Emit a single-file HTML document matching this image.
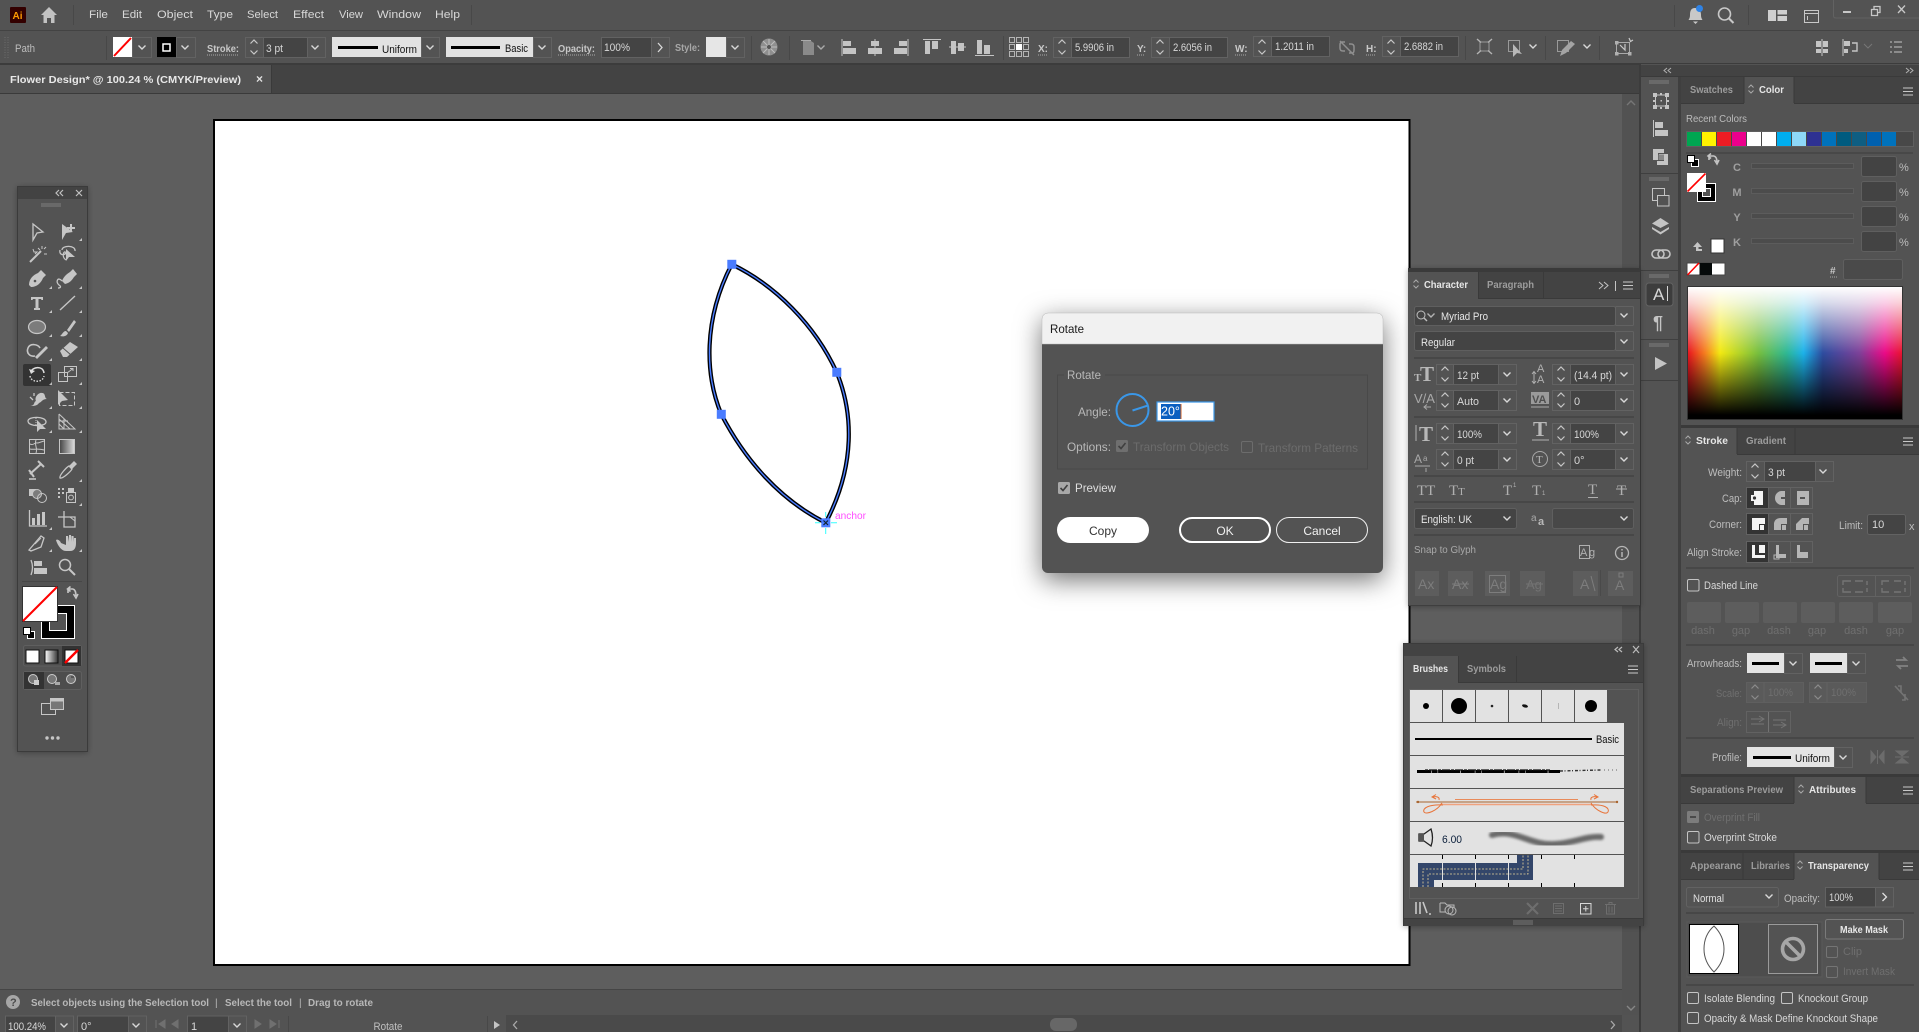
<!DOCTYPE html>
<html lang="en"><head><meta charset="utf-8"><title>Flower Design</title>
<style>
html,body{margin:0;padding:0;background:#535353;overflow:hidden}
svg{display:block;position:absolute;left:0;top:0}
text{font-family:"Liberation Sans",sans-serif;font-size:11px;fill:#d8d8d8}
.dim{fill:#6f6f6f}.lab{fill:#bdbdbd}.tab{fill:#9c9c9c;font-weight:bold;font-size:10.5px}.tabon{fill:#e6e6e6;font-weight:bold;font-size:10.5px}
.dk{fill:#111}.end{text-anchor:end}.mid{text-anchor:middle}
.f{fill:#444;stroke:#626262}.s{fill:#535353;stroke:#626262}.n{fill:none}
.ln{stroke:#c8c8c8;fill:none;stroke-width:1.3}.ic{fill:#c6c6c6}.icl{fill:none;stroke:#c6c6c6;stroke-width:1.3}
.cb{fill:none;stroke:#c4c4c4}.sep{fill:#474747}
</style></head><body>
<svg width="1919" height="1032" viewBox="0 0 1919 1032" xmlns="http://www.w3.org/2000/svg">
<defs>
<path id="c" d="M-3.5-1.5 0 2 3.5-1.5" fill="none" stroke="#d8d8d8" stroke-width="1.4"/>
<path id="sp" d="M-3.5-3.5 0-7 3.5-3.5M-3.5 3.5 0 7 3.5 3.5" fill="none" stroke="#c8c8c8" stroke-width="1.2"/>
<path id="m" d="M0 0H10M0 3.5H10M0 7H10" stroke="#c8c8c8" stroke-width="1.1" fill="none"/>
<path id="ud" d="M-2.5-1.5 0-4 2.5-1.5M-2.5 1.5 0 4 2.5 1.5" stroke="#aaa" fill="none"/>
<path id="tr" d="M12 11H15V8Z" fill="#c6c6c6"/>
<g id="grip"><path d="M0 0V4M2 0V4M4 0V4M6 0V4M8 0V4M10 0V4M12 0V4M14 0V4M16 0V4M18 0V4" stroke="#7f7f7f" stroke-width="1"/></g>
<linearGradient id="hue"><stop offset="0" stop-color="#e8151f"/><stop offset=".08" stop-color="#f57f1f"/><stop offset=".15" stop-color="#f3e911"/><stop offset=".33" stop-color="#76bf3f"/><stop offset=".46" stop-color="#2fb893"/><stop offset=".54" stop-color="#1cb2ea"/><stop offset=".63" stop-color="#2e4c9f"/><stop offset=".8" stop-color="#7d4199"/><stop offset=".92" stop-color="#ea0a88"/><stop offset="1" stop-color="#e8152f"/></linearGradient>
<linearGradient id="vw" x2="0" y2="1"><stop offset="0" stop-color="#fff"/><stop offset=".12" stop-color="#fff" stop-opacity=".8"/><stop offset=".5" stop-color="#fff" stop-opacity="0"/></linearGradient>
<linearGradient id="vb" x2="0" y2="1"><stop offset=".5" stop-color="#000" stop-opacity="0"/><stop offset=".97" stop-color="#000"/></linearGradient>
<linearGradient id="gr"><stop offset="0" stop-color="#fff"/><stop offset="1" stop-color="#333"/></linearGradient>
<filter id="sh" x="-25%" y="-25%" width="150%" height="160%"><feDropShadow dx="0" dy="7" stdDeviation="13" flood-color="#000" flood-opacity=".55"/></filter>
<filter id="sh2" x="-20%" y="-10%" width="140%" height="120%"><feDropShadow dx="0" dy="1" stdDeviation="3" flood-color="#000" flood-opacity=".3"/></filter>
<filter id="bl"><feGaussianBlur stdDeviation="1.3"/></filter>
</defs>

<!-- base -->
<rect width="1919" height="1032" fill="#535353"/>
<rect x="0" y="93" width="1622" height="897" fill="#5e5e5e"/>
<rect x="0" y="65" width="1640" height="28" fill="#434343"/>
<rect y="30" width="1919" height="1" fill="#434343"/>
<rect y="63" width="1919" height="2" fill="#3c3c3c"/>
<rect x="0" y="65" width="271" height="28" fill="#535353"/>
<rect x="271" y="65" width="1" height="28" fill="#3a3a3a"/>
<rect x="0" y="93" width="1640" height="1" fill="#3a3a3a"/>
<text x="10" y="83" style="fill:#e8e8e8;font-weight:bold;font-size:10.5px" textLength="231" lengthAdjust="spacingAndGlyphs">Flower Design* @ 100.24 % (CMYK/Preview)</text>
<text x="256" y="83" style="fill:#e0e0e0;font-weight:bold;font-size:12px">×</text>

<!-- artboard -->
<rect x="214" y="120" width="1195.5" height="845" fill="#fff" stroke="#000" stroke-width="2"/>

<!-- leaf -->
<path d="M731.7 264.3C775 285 815 325 836.7 372.3 853 412 856 465 825.7 522.7 780 500 745 460 721.3 414.3 705 375 703 320 731.7 264.3Z" fill="none" stroke="#000" stroke-width="4.2"/>
<path d="M731.7 264.3C775 285 815 325 836.7 372.3 853 412 856 465 825.7 522.7 780 500 745 460 721.3 414.3 705 375 703 320 731.7 264.3Z" fill="none" stroke="#4a7cff" stroke-width="1.4"/>
<rect x="727.3" y="259.8" width="9" height="9" fill="#4a7cff"/>
<rect x="832.3" y="367.8" width="9" height="9" fill="#4a7cff"/>
<rect x="716.8" y="409.8" width="9" height="9" fill="#4a7cff"/>
<rect x="821.3" y="518.3" width="9" height="9" fill="#4a7cff"/>
<path d="M823.5 520.5 828 525M828 520.5 823.5 525" stroke="#123" stroke-width="1.2"/>
<path d="M825.7 512V517M825.7 528V534M815 522.7H820M831 522.7H837" stroke="#3ff" stroke-width="1"/>
<text x="835" y="519" style="fill:#ff4dff;font-size:10.5px" textLength="31" lengthAdjust="spacingAndGlyphs">anchor</text>

<!-- scrollbars -->
<rect x="1622" y="94" width="17" height="921" fill="#525252"/>
<path d="M1627 105 1631 101 1635 105" fill="none" stroke="#767676" stroke-width="1.4"/>
<path d="M1627 1006 1631 1010 1635 1006" fill="none" stroke="#868686" stroke-width="1.4"/>

<!-- menu bar -->
<rect x="10" y="7" width="16" height="16" rx="1" fill="#330000"/>
<text x="12.5" y="19" style="fill:#ff9a00;font-weight:bold;font-size:10px">Ai</text>
<path d="M49 7 41 15H43.5V23H47V18H51V23H54.5V15H57Z" fill="#c2c2c2"/>
<rect x="73" y="5" width="1" height="20" fill="#484848"/>
<g>
<text x="89" y="18" textLength="19" lengthAdjust="spacingAndGlyphs">File</text>
<text x="122" y="18" textLength="20" lengthAdjust="spacingAndGlyphs">Edit</text>
<text x="157" y="18" textLength="36" lengthAdjust="spacingAndGlyphs">Object</text>
<text x="207" y="18" textLength="26" lengthAdjust="spacingAndGlyphs">Type</text>
<text x="247" y="18" textLength="31" lengthAdjust="spacingAndGlyphs">Select</text>
<text x="293" y="18" textLength="31" lengthAdjust="spacingAndGlyphs">Effect</text>
<text x="339" y="18" textLength="24" lengthAdjust="spacingAndGlyphs">View</text>
<text x="377" y="18" textLength="44" lengthAdjust="spacingAndGlyphs">Window</text>
<text x="435" y="18" textLength="25" lengthAdjust="spacingAndGlyphs">Help</text>
</g>
<rect x="471" y="5" width="1" height="20" fill="#484848"/>
<rect x="1674" y="5" width="1" height="22" fill="#484848"/>
<rect x="1748" y="5" width="1" height="20" fill="#484848"/>
<path d="M1695 8C1691 8 1690 11 1690 15 1690 18 1689 19 1688.5 20H1702.5C1702 19 1701 18 1701 15 1701 11 1699 8 1695 8ZM1693 21.5H1698L1695.5 24Z" fill="#c8c8c8"/>
<circle cx="1699.5" cy="8.5" r="3.5" fill="#2f83e6"/>
<circle cx="1724.5" cy="14" r="6" fill="none" stroke="#c8c8c8" stroke-width="1.6"/><path d="M1729 18.5 1733.5 23" stroke="#c8c8c8" stroke-width="2"/>
<path d="M1768 10H1776V21H1768ZM1777.5 10H1787V14.5H1777.5ZM1777.5 16H1787V21H1777.5Z" fill="#cfcfcf"/>
<rect x="1804.5" y="10.5" width="14" height="12" fill="none" stroke="#c8c8c8"/><path d="M1804 13.5H1819M1807.5 16V20" stroke="#c8c8c8"/>
<path d="M1833.5 0V16Q1833.5 18 1836 18H1919" fill="none" stroke="#626262"/>
<rect x="1843" y="11" width="8" height="2" fill="#c8c8c8"/>
<path d="M1871.5 9.5H1877.5V15.5H1871.5ZM1874 9.5V6.5H1880V12.5H1877.5" fill="none" stroke="#c8c8c8" stroke-width="1.3"/>
<path d="M1898 5.5 1905 13M1905 5.5 1898 13" stroke="#c8c8c8" stroke-width="1.3"/>

<!-- control bar -->
<path d="M5 37V58M8 37V58" stroke="#6c6c6c" stroke-dasharray="1 1.5"/>
<text x="15" y="52" class="lab" textLength="20" lengthAdjust="spacingAndGlyphs" style="fill:#bdbdbd">Path</text>
<rect x="106" y="36" width="1" height="24" fill="#484848"/>
<rect x="113" y="37" width="19" height="20" fill="#fff"/><path d="M114 56 131 38" stroke="#f00" stroke-width="2"/>
<rect x="132.5" y="37.5" width="19" height="20" class="s"/><use href="#c" x="142" y="47"/>
<rect x="157" y="37" width="19" height="20" fill="#000"/><rect x="163" y="44" width="7" height="7" fill="#000" stroke="#fff" stroke-width="1.5"/>
<rect x="176.5" y="37.5" width="19" height="20" class="s"/><use href="#c" x="185" y="47"/>
<text x="207" y="52" style="font-weight:bold;font-size:10.5px;fill:#c8c8c8" textLength="32" lengthAdjust="spacingAndGlyphs">Stroke:</text><path d="M207 55H239" stroke="#aaa" stroke-dasharray="1 1"/>
<rect x="245.5" y="37.5" width="18" height="20" class="s"/><rect x="263.5" y="37.5" width="44" height="20" class="f"/><rect x="307.5" y="37.5" width="18" height="20" class="s"/>
<use href="#sp" x="254" y="47"/><text x="266" y="52" textLength="17" lengthAdjust="spacingAndGlyphs">3 pt</text><use href="#c" x="315" y="47"/>
<rect x="332" y="37" width="89" height="20" fill="#e2e2e2"/><rect x="338" y="46" width="40" height="3" fill="#000"/><text x="382" y="53" class="dk" textLength="35" lengthAdjust="spacingAndGlyphs">Uniform</text>
<rect x="421.5" y="37.5" width="18" height="20" class="s"/><use href="#c" x="430" y="47"/>
<rect x="446" y="37" width="87" height="20" fill="#e2e2e2"/><rect x="451" y="46" width="49" height="3" fill="#000"/><text x="505" y="52" class="dk" textLength="23" lengthAdjust="spacingAndGlyphs">Basic</text>
<rect x="533.5" y="37.5" width="18" height="20" class="s"/><use href="#c" x="542" y="47"/>
<text x="558" y="52" style="font-weight:bold;font-size:10.5px;fill:#c8c8c8" textLength="37" lengthAdjust="spacingAndGlyphs">Opacity:</text><path d="M558 55H595" stroke="#aaa" stroke-dasharray="1 1"/>
<rect x="601.5" y="37.5" width="50" height="20" class="f"/><rect x="651.5" y="37.5" width="18" height="20" class="s"/><text x="604" y="51" textLength="26" lengthAdjust="spacingAndGlyphs">100%</text><path d="M658 43 662 47.5 658 52" fill="none" stroke="#d8d8d8" stroke-width="1.3"/>
<text x="675" y="51" class="lab" style="font-weight:bold;font-size:10.5px;fill:#a8a8a8" textLength="25" lengthAdjust="spacingAndGlyphs">Style:</text>
<rect x="706" y="37" width="20" height="20" fill="#e6e6e6"/><rect x="726.5" y="37.5" width="18" height="20" class="s"/><use href="#c" x="735" y="47"/>
<rect x="751" y="36" width="1" height="24" fill="#484848"/>
<circle cx="769" cy="47" r="8.5" fill="#8f8f8f"/><path d="M769 39V55M761 47H777M763 41 775 53M775 41 763 53" stroke="#bdbdbd"/><circle cx="769" cy="47" r="2" fill="#555"/>
<rect x="789" y="36" width="1" height="24" fill="#484848"/>
<path d="M803 41H811L814 43V55H803Z" fill="#8a8a8a"/><path d="M801 40.5H811" stroke="#aaa"/><use href="#c" x="821" y="47" style="opacity:.65"/>
<path d="M842 39V56" stroke="#c4c4c4"/><path d="M843 41H851V46H843ZM843 48H856V54H843Z" fill="#c4c4c4"/>
<path d="M875 39V56" stroke="#c4c4c4"/><path d="M871 41H879V46H871ZM868 48H882V54H868Z" fill="#c4c4c4"/>
<path d="M908 39V56" stroke="#c4c4c4"/><path d="M899 41H907V46H899ZM894 48H907V54H894Z" fill="#c4c4c4"/>
<path d="M923 39.5H941" stroke="#c4c4c4"/><path d="M925 41H930V54H925ZM932 41H938V49H932Z" fill="#c4c4c4"/>
<path d="M949 47H966" stroke="#c4c4c4"/><path d="M951 41H956V54H951ZM958 43H964V51H958Z" fill="#c4c4c4"/>
<path d="M975 55.5H994" stroke="#c4c4c4"/><path d="M977 40H982V54H977ZM984 45H990V54H984Z" fill="#c4c4c4"/>
<rect x="1003" y="36" width="1" height="24" fill="#484848"/>
<g fill="none" stroke="#b4b4b4"><rect x="1009.5" y="37.5" width="5" height="5"/><rect x="1016.5" y="37.5" width="5" height="5"/><rect x="1023.5" y="37.5" width="5" height="5"/><rect x="1009.5" y="44.5" width="5" height="5"/><rect x="1023.5" y="44.5" width="5" height="5"/><rect x="1009.5" y="51.5" width="5" height="5"/><rect x="1016.5" y="51.5" width="5" height="5"/><rect x="1023.5" y="51.5" width="5" height="5"/></g><rect x="1016" y="44" width="6" height="6" fill="#fff"/>
<g>
<text x="1038" y="52" style="font-size:10px;font-weight:bold;fill:#c8c8c8">X:</text><path d="M1038 55H1047" stroke="#aaa" stroke-dasharray="1 1"/>
<text x="1137" y="52" style="font-size:10px;font-weight:bold;fill:#c8c8c8">Y:</text><path d="M1137 55H1145" stroke="#aaa" stroke-dasharray="1 1"/>
<text x="1235" y="52" style="font-size:10px;font-weight:bold;fill:#c8c8c8">W:</text><path d="M1235 55H1247" stroke="#aaa" stroke-dasharray="1 1"/>
<text x="1366" y="52" style="font-size:10px;font-weight:bold;fill:#c8c8c8">H:</text><path d="M1366 55H1376" stroke="#aaa" stroke-dasharray="1 1"/>
</g>
<rect x="1053.5" y="37.5" width="18" height="20" class="s"/><rect x="1071.5" y="37.5" width="58" height="20" class="f"/><use href="#sp" x="1062" y="47"/><text x="1075" y="51" textLength="39" lengthAdjust="spacingAndGlyphs">5.9906 in</text>
<rect x="1151.5" y="37.5" width="18" height="20" class="s"/><rect x="1169.5" y="37.5" width="58" height="20" class="f"/><use href="#sp" x="1160" y="47"/><text x="1173" y="51" textLength="39" lengthAdjust="spacingAndGlyphs">2.6056 in</text>
<rect x="1253.5" y="36.5" width="18" height="20" class="s"/><rect x="1271.5" y="36.5" width="58" height="20" class="f"/><use href="#sp" x="1262" y="47"/><text x="1275" y="50" textLength="39" lengthAdjust="spacingAndGlyphs">1.2011 in</text>
<path d="M1345 42H1342Q1340 42 1340 45V48Q1340 51 1343 51H1345M1349 53H1352Q1354 53 1354 50V47Q1354 44 1351 44H1349M1340 41 1354 55" fill="none" stroke="#8f8f8f" stroke-width="1.5"/>
<rect x="1382.5" y="36.5" width="18" height="20" class="s"/><rect x="1400.5" y="36.5" width="58" height="20" class="f"/><use href="#sp" x="1391" y="47"/><text x="1404" y="50" textLength="39" lengthAdjust="spacingAndGlyphs">2.6882 in</text>
<rect x="1465" y="36" width="1" height="24" fill="#484848"/>
<path d="M1480 42H1489V51H1480Z" fill="none" stroke="#9a9a9a"/><path d="M1477 39 1481 42.5M1492 39 1488 42.5M1477 54 1481 50.5M1492 54 1488 50.5" stroke="#b4b4b4" stroke-width="1.4"/>
<rect x="1508.5" y="40.5" width="11" height="11" fill="none" stroke="#9a9a9a"/><path d="M1513 44 1513 57 1517 53 1522 54Z" fill="#b8b8b8"/><use href="#c" x="1533" y="46"/>
<rect x="1545" y="36" width="1" height="24" fill="#484848"/>
<rect x="1557.5" y="40.5" width="11" height="11" fill="none" stroke="#9a9a9a"/><path d="M1560 56 1562 50 1571 41 1575 44 1566 53Z" fill="#a4a4a4"/><use href="#c" x="1587" y="46"/>
<rect x="1599" y="36" width="1" height="24" fill="#484848"/>
<rect x="1616.5" y="42.5" width="13" height="11" fill="none" stroke="#aaa"/><rect x="1615" y="41" width="3.5" height="3.5" fill="#b0b0b0"/><rect x="1615" y="52" width="3.5" height="3.5" fill="#b0b0b0"/><rect x="1628" y="52" width="3.5" height="3.5" fill="#b0b0b0"/><path d="M1620 45 1625 50V44M1629 38 1630.5 41.5 1633 40" fill="none" stroke="#c8c8c8" stroke-width="1.2"/>
<path d="M1822 39V56" stroke="#c4c4c4"/><path d="M1816 41H1821V47H1816ZM1823 41H1828V47H1823ZM1816 49H1821V53H1816ZM1823 49H1828V53H1823Z" fill="#c4c4c4"/>
<path d="M1843 39V56" stroke="#c4c4c4"/><path d="M1844 41H1850V46H1844ZM1844 49H1848V53H1844Z" fill="#c4c4c4"/><path d="M1852 43H1857V51H1852" fill="none" stroke="#c4c4c4" stroke-width="1.4"/>
<path d="M1864 44 1868 48 1872 44" fill="none" stroke="#777"/>
<path d="M1890 42H1892M1890 47H1892M1890 52H1892M1894 42H1902M1894 47H1902M1894 52H1902" stroke="#c4c4c4"/>

<!-- dock column + panels base -->
<rect x="1639" y="64" width="280" height="968" fill="#535353"/>
<rect x="1639" y="64" width="2" height="968" fill="#3c3c3c"/>
<rect x="1678" y="76" width="3" height="956" fill="#3f3f3f"/>
<rect x="1641" y="65" width="278" height="11" fill="#434343"/>
<rect x="1641" y="76" width="278" height="1" fill="#3a3a3a"/>
<path d="M1667 68 1664 70.5 1667 73M1671 68 1668 70.5 1671 73M1906 68 1909 70.5 1906 73M1910 68 1913 70.5 1910 73" fill="none" stroke="#b0b0b0"/>

<!-- dock icons -->
<use href="#grip" x="1650" y="80"/>
<rect x="1655.5" y="95" width="11" height="11" fill="none" stroke="#c4c4c4"/><path d="M1653 93h4v4h-4ZM1665 93h4v4h-4ZM1653 105h4v4h-4ZM1665 105h4v4h-4ZM1660 93h2v2h-2ZM1660 107h2v2h-2ZM1653 100h2v2h-2ZM1667 100h2v2h-2ZM1660.5 100h1.5v1.5h-1.5Z" fill="#c4c4c4"/>
<path d="M1653.5 120V137" stroke="#c4c4c4"/><path d="M1655 122H1663V128H1655ZM1655 130H1668V136H1655Z" fill="#c4c4c4"/>
<path d="M1653 149H1664V153H1658V160H1653ZM1659 154H1668V165H1657V161H1664V156H1659Z" fill="#c4c4c4"/><rect x="1658.5" y="154.5" width="5.5" height="5.5" fill="#888"/>
<rect x="1641" y="173" width="37" height="1" fill="#3f3f3f"/>
<use href="#grip" x="1650" y="177"/>
<rect x="1652.5" y="188.5" width="12" height="12" fill="none" stroke="#c4c4c4"/><rect x="1657.5" y="195.5" width="11.5" height="10.5" fill="#535353" stroke="#c4c4c4"/>
<path d="M1660.5 218 1669 223.5 1660.5 228 1652 223.5ZM1652 227 1660.5 232 1669 227 1669 229 1660.5 234.5 1652 229Z" fill="#c4c4c4"/>
<rect x="1652" y="250" width="12" height="8" rx="4" fill="none" stroke="#c4c4c4" stroke-width="1.6"/><rect x="1658" y="250" width="12" height="8" rx="4" fill="none" stroke="#c4c4c4" stroke-width="1.6"/>
<rect x="1641" y="270" width="37" height="1" fill="#3f3f3f"/>
<use href="#grip" x="1650" y="274"/>
<rect x="1646" y="283" width="27" height="23" rx="3" fill="#3d3d3d" stroke="#626262"/>
<text x="1653" y="300" style="font-size:17px;fill:#d8d8d8">A</text><path d="M1667.5 286V301" stroke="#d8d8d8"/>
<text x="1653" y="329" style="font-size:18px;font-weight:bold;fill:#c4c4c4">¶</text>
<rect x="1641" y="339" width="37" height="1" fill="#3f3f3f"/>
<use href="#grip" x="1650" y="343"/>
<path d="M1655 357V370L1667 363.5Z" fill="#c4c4c4"/>
<rect x="1641" y="380" width="37" height="1" fill="#3f3f3f"/>

<!-- Color panel -->
<rect x="1681" y="77" width="238" height="26" fill="#434343"/>
<rect x="1744" y="77" width="50" height="27" fill="#535353"/><path d="M1744 77V103M1794 77V103" stroke="#3a3a3a"/><rect x="1681" y="103" width="63" height="1" fill="#3a3a3a"/><rect x="1794" y="103" width="125" height="1" fill="#3a3a3a"/>
<text x="1690" y="93" class="tab" textLength="43" lengthAdjust="spacingAndGlyphs">Swatches</text>
<use href="#ud" x="1751" y="89"/><text x="1759" y="93" class="tabon" textLength="25" lengthAdjust="spacingAndGlyphs">Color</text>
<use href="#m" x="1903" y="88"/>
<text x="1686" y="122" class="lab" textLength="61" lengthAdjust="spacingAndGlyphs" style="fill:#bbb;font-size:10.5px">Recent Colors</text>
<rect x="1686.5" y="131.5" width="227" height="15" fill="#484848" stroke="#5f5f5f"/>
<rect x="1687" y="132" width="14" height="14" fill="#00a651"/><rect x="1702" y="132" width="14" height="14" fill="#fff200"/><rect x="1717" y="132" width="14" height="14" fill="#ed1c24"/><rect x="1732" y="132" width="14" height="14" fill="#ec008c"/><rect x="1747" y="132" width="14" height="14" fill="#fff"/><rect x="1762" y="132" width="14" height="14" fill="#fff"/><rect x="1777" y="132" width="14" height="14" fill="#00aeef"/><rect x="1792" y="132" width="14" height="14" fill="#8ed8f8"/><rect x="1807" y="132" width="14" height="14" fill="#2e3192"/><rect x="1822" y="132" width="14" height="14" fill="#0072bc"/><rect x="1837" y="132" width="14" height="14" fill="#005b7f"/><rect x="1852" y="132" width="14" height="14" fill="#0f5e82"/><rect x="1867" y="132" width="14" height="14" fill="#0060af"/><rect x="1882" y="132" width="14" height="14" fill="#0072bc"/>
<rect x="1686" y="152" width="227" height="2" fill="#484848"/>
<rect x="1691.5" y="159.5" width="7" height="7" fill="#000" stroke="#fff"/><rect x="1687.5" y="155.5" width="7" height="7" fill="#fff" stroke="#000"/>
<path d="M1709 160V156H1714M1711 153.5 1708 156 1711 158.5M1714 156Q1717 157 1717 162M1714.5 160 1717 164 1719 160" fill="none" stroke="#c4c4c4" stroke-width="1.6"/>
<rect x="1697.5" y="183.5" width="18" height="18" fill="#000" stroke="#fff"/><rect x="1702.5" y="188.5" width="8" height="8" fill="#535353" stroke="#fff"/>
<rect x="1687" y="173" width="19" height="19" fill="#fff"/><path d="M1687.5 191.5 1705.5 173.5" stroke="#f00" stroke-width="1.6"/>
<g><text x="1737" y="171" class="mid" style="fill:#9f9f9f;font-weight:bold">C</text><text x="1737" y="196" class="mid" style="fill:#9f9f9f;font-weight:bold">M</text><text x="1737" y="221" class="mid" style="fill:#9f9f9f;font-weight:bold">Y</text><text x="1737" y="246" class="mid" style="fill:#9f9f9f;font-weight:bold">K</text></g>
<g fill="#4c4c4c" stroke="#5c5c5c"><rect x="1751.5" y="163.5" width="102" height="5"/><rect x="1751.5" y="188.5" width="102" height="5"/><rect x="1751.5" y="213.5" width="102" height="5"/><rect x="1751.5" y="238.5" width="102" height="5"/></g>
<g fill="#434343" stroke="#5f5f5f"><rect x="1861.5" y="156.5" width="35" height="20" rx="2"/><rect x="1861.5" y="181.5" width="35" height="20" rx="2"/><rect x="1861.5" y="206.5" width="35" height="20" rx="2"/><rect x="1861.5" y="231.5" width="35" height="20" rx="2"/></g>
<text x="1899" y="171" class="lab">%</text><text x="1899" y="196" class="lab">%</text><text x="1899" y="221" class="lab">%</text><text x="1899" y="246" class="lab">%</text>
<path d="M1697.5 242 1693 247H1696V251H1702V249H1698.5V247H1702Z" fill="#c4c4c4"/>
<rect x="1711" y="239" width="13" height="14" fill="#fff" stroke="#333"/>
<rect x="1687" y="263" width="38" height="12" fill="#fff" stroke="#444"/><rect x="1699.5" y="263" width="12.5" height="12" fill="#060a0a"/><path d="M1687.5 275 1699 263" stroke="#f00" stroke-width="1.5"/>
<text x="1830" y="274" style="font-weight:bold;fill:#c8c8c8;font-size:10px">#</text><path d="M1830 277H1837" stroke="#aaa" stroke-dasharray="1 1"/>
<rect x="1843.5" y="259.5" width="59" height="20" rx="2" fill="#4a4a4a" stroke="#5f5f5f"/>
<rect x="1688" y="287" width="214" height="132" fill="url(#hue)"/><rect x="1688" y="287" width="214" height="132" fill="url(#vb)"/><rect x="1688" y="287" width="214" height="132" fill="url(#vw)"/><rect x="1687.5" y="286.5" width="215" height="133" fill="none" stroke="#333"/>

<!-- Stroke panel -->
<rect x="1681" y="425" width="238" height="3" fill="#3a3a3a"/>
<rect x="1681" y="428" width="238" height="26" fill="#434343"/><rect x="1681" y="428" width="56" height="27" fill="#535353"/><path d="M1737 428V454M1795 428V454" stroke="#3a3a3a"/><rect x="1737" y="454" width="182" height="1" fill="#3a3a3a"/>
<use href="#ud" x="1688" y="440"/><text x="1696" y="444" class="tabon" textLength="32" lengthAdjust="spacingAndGlyphs">Stroke</text>
<text x="1746" y="444" class="tab" textLength="40" lengthAdjust="spacingAndGlyphs">Gradient</text><use href="#m" x="1903" y="438"/>
<g>
<text x="1742" y="476" class="end lab" textLength="34" lengthAdjust="spacingAndGlyphs">Weight:</text>
<text x="1742" y="502" class="end lab" textLength="20" lengthAdjust="spacingAndGlyphs">Cap:</text>
<text x="1742" y="528" class="end lab" textLength="33" lengthAdjust="spacingAndGlyphs">Corner:</text>
<text x="1742" y="556" class="end lab" textLength="55" lengthAdjust="spacingAndGlyphs">Align Stroke:</text>
<text x="1839" y="529" class="lab" textLength="24" lengthAdjust="spacingAndGlyphs">Limit:</text>
<text x="1742" y="667" class="end lab" textLength="55" lengthAdjust="spacingAndGlyphs">Arrowheads:</text>
<text x="1742" y="697" class="end dim" textLength="26" lengthAdjust="spacingAndGlyphs">Scale:</text>
<text x="1742" y="726" class="end dim" textLength="25" lengthAdjust="spacingAndGlyphs">Align:</text>
<text x="1742" y="761" class="end lab" textLength="30" lengthAdjust="spacingAndGlyphs">Profile:</text>
</g>
<rect x="1746.5" y="461.5" width="18" height="20" class="s"/><rect x="1764.5" y="461.5" width="51" height="20" class="f"/><rect x="1815.5" y="461.5" width="18" height="20" class="s"/><use href="#sp" x="1755" y="471"/><text x="1768" y="476" textLength="17" lengthAdjust="spacingAndGlyphs">3 pt</text><use href="#c" x="1823" y="471"/>
<g>
<rect x="1746.5" y="487.5" width="66" height="21" class="s"/><rect x="1747" y="488" width="22" height="20" fill="#333"/><path d="M1768.5 488V508M1790.5 488V508" stroke="#626262"/>
</g>
<path d="M1754 491H1763V505H1754V501H1751V495H1754Z" fill="#f4f4f4"/><circle cx="1754.5" cy="498" r="1.6" fill="#333"/>
<path d="M1775 498A7 7 0 0 1 1781 491H1785V505H1781A7 7 0 0 1 1775 498Z" fill="#b5b5b5"/><rect x="1781" y="497" width="5" height="2" fill="#535353"/>
<rect x="1797" y="491" width="12" height="14" fill="#b5b5b5"/><rect x="1800" y="497" width="5" height="2" fill="#535353"/>
<rect x="1746.5" y="513.5" width="66" height="21" class="s"/><rect x="1747" y="514" width="22" height="20" fill="#333"/><path d="M1768.5 514V534M1790.5 514V534" stroke="#626262"/>
<path d="M1752 518H1765V524H1759V530H1752Z" fill="#f4f4f4"/><rect x="1760" y="525" width="4" height="5" fill="#f4f4f4"/>
<path d="M1774 530V523Q1775 518 1781 518H1787V524H1781V530ZM1782 525H1786V530H1782Z" fill="#b5b5b5"/>
<path d="M1796 530V524L1802 518H1809V524H1803V530ZM1804 525H1808V530H1804Z" fill="#b5b5b5"/>
<rect x="1867.5" y="514.5" width="38" height="20" class="f" rx="2"/><text x="1872" y="528">10</text><text x="1909" y="530" class="lab">x</text>
<rect x="1746.5" y="541.5" width="66" height="21" class="s"/><rect x="1747" y="542" width="22" height="20" fill="#333"/><path d="M1768.5 542V562M1790.5 542V562" stroke="#626262"/>
<path d="M1752 545H1755V555H1765V558H1752ZM1757 545H1759V553H1765V545Z" fill="#f4f4f4" fill-rule="evenodd"/>
<path d="M1776 545H1779V554H1786V558H1776Z" fill="#b5b5b5"/><rect x="1774" y="555" width="5" height="4" fill="none" stroke="#b5b5b5"/>
<path d="M1797 545H1800V552H1808V558H1797Z" fill="#b5b5b5"/>
<rect x="1686" y="567" width="228" height="2" class="sep"/>
<rect x="1687.5" y="579.5" width="11.5" height="11.5" rx="1.5" class="cb"/><text x="1704" y="589" style="fill:#d8d8d8" textLength="54" lengthAdjust="spacingAndGlyphs">Dashed Line</text>
<rect x="1837.5" y="575.5" width="73" height="21" rx="2" fill="none" stroke="#626262"/><path d="M1875.5 576V597" stroke="#626262"/>
<path d="M1843 585V581H1851M1855 581H1863M1867 581V585M1843 588V592H1851M1855 592H1863M1867 592V588M1882 585V581H1889M1894 581H1901M1905 581V585M1882 588V592H1889M1894 592H1901M1905 592V588" stroke="#747474" stroke-width="1.4" fill="none"/>
<g fill="#5d5d5d"><rect x="1687" y="602" width="34" height="21" rx="2"/><rect x="1725" y="602" width="34" height="21" rx="2"/><rect x="1763" y="602" width="34" height="21" rx="2"/><rect x="1801" y="602" width="34" height="21" rx="2"/><rect x="1839" y="602" width="34" height="21" rx="2"/><rect x="1878" y="602" width="34" height="21" rx="2"/></g>
<g><text x="1703" y="634" class="mid dim">dash</text><text x="1741" y="634" class="mid dim">gap</text><text x="1779" y="634" class="mid dim">dash</text><text x="1817" y="634" class="mid dim">gap</text><text x="1856" y="634" class="mid dim">dash</text><text x="1895" y="634" class="mid dim">gap</text></g>
<rect x="1686" y="644" width="228" height="2" class="sep"/>
<rect x="1747" y="653" width="37" height="20" fill="#e4e4e4"/><rect x="1752" y="662" width="27" height="3" fill="#000"/><rect x="1784.5" y="653.5" width="18" height="20" class="s"/><use href="#c" x="1793" y="663"/>
<rect x="1810" y="653" width="37" height="20" fill="#e4e4e4"/><rect x="1815" y="662" width="27" height="3" fill="#000"/><rect x="1847.5" y="653.5" width="18" height="20" class="s"/><use href="#c" x="1856" y="663"/>
<path d="M1896 660H1906L1903 657M1908 666H1898L1901 669" fill="none" stroke="#828282" stroke-width="1.8"/>
<g fill="#5a5a5a" stroke="#5f5f5f"><rect x="1746.5" y="682.5" width="57" height="20"/><rect x="1809.5" y="682.5" width="57" height="20"/></g>
<use href="#sp" x="1755" y="692" style="opacity:.45"/><use href="#sp" x="1818" y="692" style="opacity:.45"/><path d="M1764 682V702M1827 682V702" stroke="#626262"/>
<text x="1768" y="696" class="dim" textLength="25" lengthAdjust="spacingAndGlyphs">100%</text><text x="1831" y="696" class="dim" textLength="25" lengthAdjust="spacingAndGlyphs">100%</text>
<path d="M1895 686 1908 700M1898 686H1901V692M1902 700H1905V694" fill="none" stroke="#747474" stroke-width="1.6"/>
<rect x="1746.5" y="711.5" width="44" height="21" fill="none" stroke="#626262"/><path d="M1768.5 712V732M1751 719H1764M1751 724H1764M1759 716 1764 719 1759 722M1773 720H1786M1773 725H1786M1781 722 1786 725 1781 728" stroke="#747474" fill="none"/>
<rect x="1686" y="737" width="228" height="2" class="sep"/>
<rect x="1747" y="747" width="87" height="20" fill="#e4e4e4"/><rect x="1753" y="756" width="38" height="3" fill="#000"/><text x="1795" y="762" class="dk" textLength="35" lengthAdjust="spacingAndGlyphs">Uniform</text>
<rect x="1834.5" y="747.5" width="18" height="20" class="s"/><use href="#c" x="1843" y="757"/>
<path d="M1871 751V763L1876 757ZM1884 751V763L1879 757ZM1877.5 750V764M1896 751H1908L1902 756ZM1896 763H1908L1902 758ZM1895 757H1909" fill="#6c6c6c" stroke="#6c6c6c"/>

<!-- Attributes panel -->
<rect x="1681" y="774" width="238" height="3" fill="#3a3a3a"/>
<rect x="1681" y="777" width="238" height="26" fill="#434343"/><rect x="1794" y="777" width="72" height="27" fill="#535353"/><path d="M1794 777V803M1866 777V803" stroke="#3a3a3a"/><rect x="1681" y="803" width="113" height="1" fill="#3a3a3a"/><rect x="1866" y="803" width="53" height="1" fill="#3a3a3a"/>
<text x="1690" y="793" class="tab" textLength="93" lengthAdjust="spacingAndGlyphs">Separations Preview</text>
<use href="#ud" x="1801" y="789"/><text x="1809" y="793" class="tabon" textLength="47" lengthAdjust="spacingAndGlyphs">Attributes</text><use href="#m" x="1903" y="787"/>
<rect x="1687" y="811" width="12" height="12" rx="1.5" fill="#7c7c7c"/><rect x="1690" y="816" width="6" height="2" fill="#4a4a4a"/>
<text x="1704" y="821" class="dim" textLength="56" lengthAdjust="spacingAndGlyphs">Overprint Fill</text>
<rect x="1687.5" y="831.5" width="11.5" height="11.5" rx="1.5" class="cb"/><text x="1704" y="841" style="fill:#d8d8d8" textLength="73" lengthAdjust="spacingAndGlyphs">Overprint Stroke</text>

<!-- Transparency panel -->
<rect x="1681" y="850" width="238" height="3" fill="#3a3a3a"/>
<rect x="1681" y="853" width="238" height="26" fill="#434343"/><rect x="1794" y="853" width="85" height="27" fill="#535353"/><path d="M1743 853V879M1794 853V879M1879 853V879" stroke="#3a3a3a"/><rect x="1681" y="879" width="113" height="1" fill="#3a3a3a"/><rect x="1879" y="879" width="40" height="1" fill="#3a3a3a"/>
<svg x="1690" y="853" width="52" height="26"><text x="0" y="16" class="tab" textLength="57" lengthAdjust="spacingAndGlyphs">Appearance</text></svg>
<text x="1751" y="869" class="tab" textLength="39" lengthAdjust="spacingAndGlyphs">Libraries</text>
<use href="#ud" x="1800" y="865"/><text x="1808" y="869" class="tabon" textLength="61" lengthAdjust="spacingAndGlyphs">Transparency</text><use href="#m" x="1903" y="863"/>
<rect x="1686.5" y="887.5" width="92" height="19.5" rx="2" fill="#535353" stroke="#626262"/><text x="1693" y="902" style="fill:#e0e0e0" textLength="31" lengthAdjust="spacingAndGlyphs">Normal</text><use href="#c" x="1769" y="896"/>
<text x="1784" y="902" class="lab" textLength="36" lengthAdjust="spacingAndGlyphs">Opacity:</text>
<rect x="1825.5" y="887.5" width="50" height="19.5" class="f"/><rect x="1875.5" y="887.5" width="18" height="19.5" class="s"/><text x="1829" y="901" textLength="24" lengthAdjust="spacingAndGlyphs">100%</text><path d="M1882.5 893 1886.5 897 1882.5 901" fill="none" stroke="#e0e0e0" stroke-width="1.3"/>
<rect x="1686" y="912" width="228" height="2" class="sep"/>
<rect x="1687" y="922" width="135" height="55" fill="#4d4d4d" stroke="#5a5a5a"/>
<rect x="1689.5" y="924.5" width="49" height="49" fill="#fff" stroke="#000"/>
<path d="M1714 926C1706 933 1704 941 1704 949 1704 957 1707 965 1714 972 1721 965 1724 957 1724 949 1724 941 1721 933 1714 926Z" fill="none" stroke="#555"/>
<rect x="1768.5" y="924.5" width="49" height="49" fill="#535353" stroke="#9a9a9a"/>
<circle cx="1793" cy="949" r="10.5" fill="none" stroke="#a6a6a6" stroke-width="3.6"/><path d="M1786 942 1800 956" stroke="#a6a6a6" stroke-width="3.6"/>
<rect x="1825.5" y="919.5" width="78" height="19.5" rx="2" fill="#535353" stroke="#7a7a7a"/><text x="1864" y="933" class="mid" style="fill:#e8e8e8;font-weight:bold;font-size:10.5px" textLength="48" lengthAdjust="spacingAndGlyphs">Make Mask</text>
<rect x="1826.5" y="946.5" width="11" height="11" rx="1.5" fill="none" stroke="#747474"/><text x="1843" y="955" class="dim">Clip</text>
<rect x="1826.5" y="966.5" width="11" height="11" rx="1.5" fill="none" stroke="#747474"/><text x="1843" y="975" class="dim" textLength="52" lengthAdjust="spacingAndGlyphs">Invert Mask</text>
<rect x="1686" y="984" width="228" height="2" class="sep"/>
<rect x="1687.5" y="992.5" width="11" height="11" rx="1.5" class="cb"/><text x="1704" y="1002" style="fill:#d8d8d8" textLength="71" lengthAdjust="spacingAndGlyphs">Isolate Blending</text>
<rect x="1781.5" y="992.5" width="11" height="11" rx="1.5" class="cb"/><text x="1798" y="1002" style="fill:#d8d8d8" textLength="70" lengthAdjust="spacingAndGlyphs">Knockout Group</text>
<rect x="1687.5" y="1012.5" width="11" height="11" rx="1.5" class="cb"/><text x="1704" y="1022" style="fill:#d8d8d8" textLength="174" lengthAdjust="spacingAndGlyphs">Opacity &amp; Mask Define Knockout Shape</text>

<!-- Character panel -->
<rect x="1408" y="268" width="232" height="338" fill="#535353" filter="url(#sh2)"/>
<rect x="1408" y="268" width="232" height="4" fill="#3a3a3a"/>
<rect x="1408" y="272" width="232" height="26" fill="#434343"/><rect x="1408" y="272" width="70" height="27" fill="#535353"/><path d="M1478.5 272V298M1543.5 272V298" stroke="#3a3a3a"/><rect x="1478" y="298" width="162" height="1" fill="#3a3a3a"/>
<use href="#ud" x="1416" y="284"/><text x="1424" y="288" class="tabon" textLength="44" lengthAdjust="spacingAndGlyphs">Character</text><text x="1487" y="288" class="tab" textLength="47" lengthAdjust="spacingAndGlyphs">Paragraph</text>
<path d="M1599 282 1603 285.5 1599 289M1604 282 1608 285.5 1604 289M1615.5 281V291" fill="none" stroke="#c4c4c4"/><use href="#m" x="1623" y="282"/>
<rect x="1414.5" y="306.5" width="201" height="19" rx="2" fill="#444" stroke="#5f5f5f"/><rect x="1615.5" y="306.5" width="18" height="19" rx="1" class="s"/>
<circle cx="1421" cy="315" r="4" fill="none" stroke="#c0c0c0"/><path d="M1424 318 1427 321" stroke="#c0c0c0" stroke-width="1.4"/><use href="#c" x="1431" y="315" style="opacity:.75"/>
<text x="1441" y="320" style="fill:#e8e8e8" textLength="47" lengthAdjust="spacingAndGlyphs">Myriad Pro</text><use href="#c" x="1624" y="315"/>
<rect x="1414.5" y="331.5" width="201" height="19" rx="2" fill="#444" stroke="#5f5f5f"/><rect x="1615.5" y="331.5" width="18" height="19" rx="1" class="s"/>
<text x="1421" y="346" style="fill:#e8e8e8" textLength="34" lengthAdjust="spacingAndGlyphs">Regular</text><use href="#c" x="1624" y="341"/>
<rect x="1414" y="357" width="220" height="2" class="sep"/>
<!-- fields -->
<g>
<rect x="1436.5" y="364.5" width="17" height="20" class="s"/><rect x="1453.5" y="364.5" width="45" height="20" class="f"/><rect x="1498.5" y="364.5" width="18" height="20" class="s"/><use href="#sp" x="1445" y="374"/><use href="#c" x="1507" y="374"/><text x="1457" y="379" textLength="22" lengthAdjust="spacingAndGlyphs">12 pt</text>
<rect x="1436.5" y="390.5" width="17" height="20" class="s"/><rect x="1453.5" y="390.5" width="45" height="20" class="f"/><rect x="1498.5" y="390.5" width="18" height="20" class="s"/><use href="#sp" x="1445" y="400"/><use href="#c" x="1507" y="400"/><text x="1457" y="405" textLength="22" lengthAdjust="spacingAndGlyphs">Auto</text>
<rect x="1436.5" y="423.5" width="17" height="20" class="s"/><rect x="1453.5" y="423.5" width="45" height="20" class="f"/><rect x="1498.5" y="423.5" width="18" height="20" class="s"/><use href="#sp" x="1445" y="433"/><use href="#c" x="1507" y="433"/><text x="1457" y="438" textLength="25" lengthAdjust="spacingAndGlyphs">100%</text>
<rect x="1436.5" y="449.5" width="17" height="20" class="s"/><rect x="1453.5" y="449.5" width="45" height="20" class="f"/><rect x="1498.5" y="449.5" width="18" height="20" class="s"/><use href="#sp" x="1445" y="459"/><use href="#c" x="1507" y="459"/><text x="1457" y="464" textLength="17" lengthAdjust="spacingAndGlyphs">0 pt</text>
<rect x="1552.5" y="364.5" width="18" height="20" class="s"/><rect x="1570.5" y="364.5" width="45" height="20" class="f"/><rect x="1615.5" y="364.5" width="18" height="20" class="s"/><use href="#sp" x="1561" y="374"/><use href="#c" x="1624" y="374"/><text x="1574" y="379" textLength="38" lengthAdjust="spacingAndGlyphs">(14.4 pt)</text>
<rect x="1552.5" y="390.5" width="18" height="20" class="s"/><rect x="1570.5" y="390.5" width="45" height="20" class="f"/><rect x="1615.5" y="390.5" width="18" height="20" class="s"/><use href="#sp" x="1561" y="400"/><use href="#c" x="1624" y="400"/><text x="1574" y="405">0</text>
<rect x="1552.5" y="423.5" width="18" height="20" class="s"/><rect x="1570.5" y="423.5" width="45" height="20" class="f"/><rect x="1615.5" y="423.5" width="18" height="20" class="s"/><use href="#sp" x="1561" y="433"/><use href="#c" x="1624" y="433"/><text x="1574" y="438" textLength="25" lengthAdjust="spacingAndGlyphs">100%</text>
<rect x="1552.5" y="449.5" width="18" height="20" class="s"/><rect x="1570.5" y="449.5" width="45" height="20" class="f"/><rect x="1615.5" y="449.5" width="18" height="20" class="s"/><use href="#sp" x="1561" y="459"/><use href="#c" x="1624" y="459"/><text x="1574" y="464">0°</text>
</g>
<g>
<text x="1414" y="381" style="font-family:'Liberation Serif',serif;font-size:11px;font-weight:bold;fill:#b8b8b8">T</text><text x="1420" y="381" style="font-family:'Liberation Serif',serif;font-size:21px;font-weight:bold;fill:#b8b8b8">T</text>
<text x="1537" y="372" style="font-size:11px;fill:#b0b0b0">A</text><text x="1537" y="383" style="font-size:11px;fill:#b0b0b0">A</text><path d="M1534 372V383M1532 374 1534 371.5 1536 374M1532 381 1534 383.5 1536 381" stroke="#b0b0b0" fill="none"/>
<text x="1414" y="403" style="font-size:13px;fill:#a8a8a8">V/A</text><path d="M1424 407H1431M1427 404.5 1424 407 1427 409.5" stroke="#a8a8a8" fill="none"/>
<rect x="1531" y="392" width="18" height="12" fill="#9a9a9a"/><text x="1532" y="403" style="font-size:11px;font-weight:bold;fill:#4f4f4f">VA</text><path d="M1531 407H1549" stroke="#a8a8a8"/>
<path d="M1416 425V441" stroke="#b0b0b0"/><text x="1419" y="441" style="font-family:'Liberation Serif',serif;font-size:21px;font-weight:bold;fill:#b8b8b8">T</text>
<text x="1533" y="436" style="font-family:'Liberation Serif',serif;font-size:21px;font-weight:bold;fill:#b8b8b8">T</text><path d="M1532 440H1549" stroke="#b0b0b0"/>
<text x="1414" y="463" style="font-size:12px;fill:#a8a8a8">A</text><text x="1423" y="461" style="font-size:8px;fill:#a8a8a8">a</text><path d="M1415 466H1430M1426 468V472" stroke="#a8a8a8"/>
<circle cx="1540" cy="459" r="7.5" fill="none" stroke="#a8a8a8"/><text x="1536" y="463" style="font-family:'Liberation Serif',serif;font-size:11px;fill:#b8b8b8">T</text>
</g>
<rect x="1414" y="416" width="220" height="2" class="sep"/><rect x="1414" y="475" width="220" height="2" class="sep"/>
<g>
<text x="1417" y="495" style="font-family:'Liberation Serif',serif;font-size:15px;fill:#b0b0b0">TT</text>
<text x="1449" y="495" style="font-family:'Liberation Serif',serif;font-size:15px;fill:#b0b0b0">T<tspan style="font-size:11px">T</tspan></text>
<text x="1503" y="495" style="font-family:'Liberation Serif',serif;font-size:15px;fill:#b0b0b0">T</text><text x="1513" y="487" style="font-size:6px;fill:#b0b0b0">1</text>
<text x="1532" y="495" style="font-family:'Liberation Serif',serif;font-size:15px;fill:#b0b0b0">T</text><text x="1542" y="495" style="font-size:6px;fill:#b0b0b0">1</text>
<text x="1588" y="494" style="font-family:'Liberation Serif',serif;font-size:15px;fill:#b0b0b0">T</text><path d="M1588 497.5H1598" stroke="#b0b0b0"/>
<text x="1617" y="495" style="font-family:'Liberation Serif',serif;font-size:15px;fill:#b0b0b0">T</text><path d="M1616 489H1627" stroke="#b0b0b0"/>
</g>
<rect x="1414" y="501" width="220" height="2" class="sep"/>
<rect x="1414.5" y="508.5" width="102" height="20" rx="2" fill="#444" stroke="#5f5f5f"/><text x="1421" y="523" style="fill:#e8e8e8" textLength="51" lengthAdjust="spacingAndGlyphs">English: UK</text><use href="#c" x="1507" y="518"/>
<text x="1531" y="521" style="font-size:10px;fill:#a8a8a8">a</text><text x="1538" y="525" style="font-size:11px;font-weight:bold;fill:#b8b8b8">a</text>
<rect x="1552.5" y="508.5" width="81" height="20" rx="2" fill="#484848" stroke="#5f5f5f"/><use href="#c" x="1624" y="518"/>
<rect x="1414" y="534" width="220" height="2" class="sep"/>
<text x="1414" y="553" class="lab" textLength="62" lengthAdjust="spacingAndGlyphs" style="fill:#a8a8a8;font-size:10.5px">Snap to Glyph</text>
<rect x="1579.5" y="545.5" width="10" height="13" fill="none" stroke="#b0b0b0"/><text x="1580" y="556" style="font-size:11px;fill:#b0b0b0">A</text><text x="1589" y="556" style="font-size:11px;fill:#b0b0b0">g</text>
<circle cx="1622" cy="553" r="6.5" fill="none" stroke="#b5b5b5" stroke-width="1.3"/><path d="M1622 552V557M1622 549V550.5" stroke="#b5b5b5" stroke-width="1.5"/>
<g fill="#5d5d5d"><rect x="1415" y="571" width="24" height="25"/><rect x="1448" y="571" width="25" height="25"/><rect x="1485" y="571" width="25" height="25"/><rect x="1520" y="571" width="25" height="25"/><rect x="1573" y="571" width="25" height="25"/><rect x="1608" y="571" width="25" height="25"/></g>
<g><text x="1418" y="589" style="font-size:14px;fill:#7d7d7d">Ax</text><text x="1452" y="589" style="font-size:14px;fill:#7d7d7d">Ax</text><path d="M1452 584H1469" stroke="#7d7d7d"/><rect x="1489.5" y="575.5" width="16" height="17" fill="none" stroke="#7d7d7d"/><text x="1490" y="589" style="font-size:14px;fill:#7d7d7d">Ag</text><text x="1526" y="589" style="font-size:13px;fill:#727272">Ag</text><path d="M1526 584H1543" stroke="#727272"/><text x="1580" y="589" style="font-size:14px;fill:#7d7d7d">A</text><path d="M1591 576 1595 591" stroke="#7d7d7d"/><text x="1615" y="590" style="font-size:14px;fill:#7d7d7d">A</text><rect x="1619" y="573" width="4" height="4" fill="none" stroke="#7d7d7d"/></g>
<rect x="1600" y="570" width="1" height="26" fill="#4a4a4a"/>
<rect x="1408" y="605" width="232" height="1" fill="#3f3f3f"/>

<!-- Brushes panel -->
<rect x="1403.5" y="643.5" width="240" height="282" fill="#535353" stroke="#3a3a3a" filter="url(#sh2)"/>
<rect x="1404" y="644" width="239" height="12" fill="#434343"/>
<path d="M1618 647 1615 649.5 1618 652M1622 647 1619 649.5 1622 652M1633 646 1639 653M1639 646 1633 653" fill="none" stroke="#bbb" stroke-width="1.2"/>
<rect x="1404" y="656" width="239" height="26" fill="#434343"/><rect x="1404" y="656" width="54" height="27" fill="#535353"/><path d="M1458.5 656V682M1516.5 656V682" stroke="#3a3a3a"/><rect x="1458" y="682" width="185" height="1" fill="#3a3a3a"/>
<text x="1413" y="672" class="tabon" textLength="35" lengthAdjust="spacingAndGlyphs">Brushes</text><text x="1467" y="672" class="tab" textLength="39" lengthAdjust="spacingAndGlyphs">Symbols</text><use href="#m" x="1628" y="666"/>
<rect x="1409.5" y="689.5" width="229" height="209" fill="none" stroke="#5f5f5f"/>
<g fill="#e2e2e2"><rect x="1410" y="690" width="32" height="32"/><rect x="1443" y="690" width="32" height="32"/><rect x="1476" y="690" width="32" height="32"/><rect x="1509" y="690" width="32" height="32"/><rect x="1542" y="690" width="32" height="32"/><rect x="1575" y="690" width="32" height="32"/>
<rect x="1410" y="723" width="214" height="32"/><rect x="1410" y="756" width="214" height="32"/><rect x="1410" y="789" width="214" height="32"/><rect x="1410" y="822" width="214" height="32"/><rect x="1410" y="855" width="214" height="32"/></g>
<circle cx="1426" cy="706" r="3" fill="#000"/><circle cx="1459" cy="706" r="8" fill="#000"/><circle cx="1492" cy="706" r="1.3" fill="#222"/><ellipse cx="1525" cy="706" rx="3" ry="1.5" fill="#111" transform="rotate(15 1525 706)"/><rect x="1558" y="703" width=".8" height="6" fill="#aaa"/><circle cx="1591" cy="706" r="6" fill="#000"/>
<rect x="1415" y="738" width="177" height="2" fill="#000"/><text x="1596" y="743" class="dk" textLength="23" lengthAdjust="spacingAndGlyphs">Basic</text>
<path d="M1417 771.5H1560" stroke="#000" stroke-width="3" stroke-dasharray="14 .6 6 .5 22 .7" fill="none"/>
<path d="M1425 770H1550" stroke="#111" stroke-width="1.2" stroke-dasharray="3 1 8 1" fill="none"/>
<path d="M1560 771 1600 770" stroke="#333" stroke-width="1.4" stroke-dasharray="3 1.5 1 2" fill="none"/><path d="M1600 770 1618 770" stroke="#666" stroke-width="1" stroke-dasharray="1 3" fill="none"/>
<path d="M1416 802H1618" stroke="#a8642e" stroke-width="1"/><path d="M1455 799.5H1578" stroke="#e88a5a" stroke-width="1"/><path d="M1440 804.5H1592" stroke="#f0a27e" stroke-width="1.6"/>
<path d="M1439 800C1440 797 1436 796 1433 797M1436 794.5 1432 797 1436 799M1443 805C1430 804 1422 808 1424 812 1426 815 1437 811 1442 803" fill="none" stroke="#e8743a"/>
<path d="M1591 800C1590 797 1594 796 1597 797M1594 794.5 1598 797 1594 799M1591 805C1604 804 1610 808 1608 812 1606 815 1596 811 1591 803" fill="none" stroke="#e8743a"/>
<circle cx="1418" cy="802" r="1.2" fill="#a8642e"/><circle cx="1617" cy="802" r="1.2" fill="#a8642e"/>
<path d="M1419 834H1424L1431 829Q1434 838 1431 846L1424 841H1419Z" fill="#e2e2e2" stroke="#222" stroke-width="1.3"/><rect x="1419" y="834" width="5" height="7" fill="#555"/>
<text x="1442" y="843" style="fill:#0a1e3a;font-size:11px" textLength="20" lengthAdjust="spacingAndGlyphs">6.00</text>
<path d="M1492 835C1515 828 1530 846 1555 844 1575 843 1585 836 1601 837" fill="none" stroke="#555" stroke-width="6" stroke-linecap="round" opacity=".85" filter="url(#bl)"/>
<path d="M1418 863H1517V855H1533V880H1434V887H1418Z" fill="#33466a"/>
<path d="M1423 887V869H1523V855M1428 887V874H1528V855" fill="none" stroke="#e8d49a" stroke-width=".8" stroke-dasharray="2 1.5"/>
<path d="M1442.5 855V859M1475.5 855V859M1508.5 855V859M1541.5 855V859M1574.5 855V859M1442.5 883V887M1475.5 883V887M1508.5 883V887M1541.5 883V887M1574.5 883V887" stroke="#000"/>
<path d="M1442.5 863V880M1475.5 863V880M1508.5 863V880" stroke="#e2e2e2"/>
<path d="M1416 902V914M1420 902V914M1423 902 1427 913M1429 914H1431" stroke="#c8c8c8" stroke-width="1.6"/>
<path d="M1440 903V912H1446M1440 903H1445L1447 905H1454V908" fill="none" stroke="#b8b8b8"/><circle cx="1452" cy="911" r="4" fill="none" stroke="#b8b8b8"/><circle cx="1449" cy="910" r="4" fill="none" stroke="#b8b8b8"/>
<path d="M1527 903 1538 914M1538 903 1527 914" stroke="#6e6e6e" stroke-width="2.2"/>
<rect x="1553.5" y="903.5" width="10" height="10" fill="none" stroke="#6e6e6e"/><path d="M1555 906H1562M1555 908.5H1562M1555 911H1562" stroke="#6e6e6e"/>
<rect x="1580.5" y="903.5" width="10.5" height="10.5" fill="none" stroke="#d8d8d8"/><path d="M1585.8 906V911.5M1583 908.8H1588.5" stroke="#d8d8d8"/>
<path d="M1605 904.5H1616M1609 904V902.5H1612V904M1606.5 905V914H1614.5V905M1609 906.5V912.5M1612 906.5V912.5" fill="none" stroke="#6e6e6e"/>
<rect x="1404" y="919" width="239" height="7" fill="#434343"/><rect x="1404" y="918" width="239" height="1" fill="#3a3a3a"/><path d="M1514 920V925M1516 920V925M1518 920V925M1520 920V925M1522 920V925M1524 920V925M1526 920V925M1528 920V925M1530 920V925M1532 920V925" stroke="#777"/>

<!-- status bar -->
<rect x="0" y="990" width="1622" height="42" fill="#535353"/>
<rect x="0" y="989" width="1622" height="1" fill="#454545"/>
<circle cx="13" cy="1002" r="7" fill="#a6a6a6"/><text x="10" y="1006" style="font-weight:bold;fill:#4a4a4a;font-size:11px">?</text>
<g>
<text x="31" y="1006" style="fill:#b8b8b8;font-size:10px;font-weight:bold" textLength="178" lengthAdjust="spacingAndGlyphs">Select objects using the Selection tool</text>
<text x="215" y="1006" style="fill:#b8b8b8;font-size:10px">|</text>
<text x="225" y="1006" style="fill:#b8b8b8;font-size:10px;font-weight:bold" textLength="67" lengthAdjust="spacingAndGlyphs">Select the tool</text>
<text x="299" y="1006" style="fill:#b8b8b8;font-size:10px">|</text>
<text x="308" y="1006" style="fill:#b8b8b8;font-size:10px;font-weight:bold" textLength="65" lengthAdjust="spacingAndGlyphs">Drag to rotate</text>
</g>
<rect x="5.5" y="1016" width="50" height="17" class="f"/><rect x="55.5" y="1016" width="18" height="17" class="s"/><text x="8" y="1030" textLength="38" lengthAdjust="spacingAndGlyphs">100.24%</text><use href="#c" x="64" y="1025"/>
<rect x="77.5" y="1016" width="51" height="17" class="f"/><rect x="128.5" y="1016" width="18" height="17" class="s"/><text x="81" y="1030">0°</text><use href="#c" x="136" y="1025"/>
<path d="M156 1020V1028M165 1020 159 1024 165 1028ZM178 1020 172 1024 178 1028Z" fill="#707070" stroke="#707070"/>
<rect x="187.5" y="1016" width="41" height="17" class="f"/><rect x="228.5" y="1016" width="18" height="17" class="s"/><text x="191" y="1030">1</text><use href="#c" x="237" y="1025"/>
<path d="M255 1020 261 1024 255 1028ZM270 1020 276 1024 270 1028ZM279 1020V1028" fill="#707070" stroke="#707070"/>
<rect x="288" y="1016" width="1" height="16" fill="#484848"/>
<text x="388" y="1030" class="mid" style="fill:#c0c0c0" textLength="29" lengthAdjust="spacingAndGlyphs">Rotate</text>
<rect x="487" y="1016" width="1" height="16" fill="#484848"/>
<path d="M494 1021 500 1025 494 1029Z" fill="#c4c4c4"/>
<rect x="506" y="1015" width="1116" height="17" fill="#4a4a4a"/>
<path d="M517 1021 513.5 1025 517 1029" fill="none" stroke="#aaa" stroke-width="1.3"/>
<rect x="1050" y="1018" width="27" height="13" rx="6" fill="#676767"/>
<path d="M1611 1021 1614.5 1025 1611 1029" fill="none" stroke="#aaa" stroke-width="1.3"/>
<rect x="1622" y="1015" width="17" height="17" fill="#535353"/>

<!-- Tools panel -->
<rect x="17.5" y="186.5" width="70" height="565" fill="#535353" stroke="#3a3a3a" filter="url(#sh2)"/>
<rect x="18" y="187" width="69" height="12" fill="#434343"/>
<path d="M59 190 56 193 59 196M63 190 60 193 63 196M76 190 82 196M82 190 76 196" fill="none" stroke="#c0c0c0" stroke-width="1.2"/>
<g transform="translate(42 203)"><path d="M0 0V4M2 0V4M4 0V4M6 0V4M8 0V4M10 0V4M12 0V4M14 0V4M16 0V4M18 0V4" stroke="#7f7f7f"/></g>

<rect x="23" y="364" width="28" height="22" rx="2" fill="#333"/>
<g>
<!-- row0 --><path d="M33 224V240L37 233 43 232Z" class="icl"/>
<path d="M62 224V240L66 233 73 232Z" class="ic"/><path d="M71 224V232M67 228H75" stroke="#c6c6c6" stroke-width="2"/><use href="#tr" x="67" y="230"/>
<!-- row1 wand/lasso --><path d="M30 262 41 251" stroke="#c6c6c6" stroke-width="2"/><path d="M33 249 34 252 37 252 35 254M42 246V249M38 248 40 250M44 254H47M44 249 46 247" stroke="#c6c6c6" fill="none"/>
<path d="M62 250C62 245 76 245 75 251M60 250C59 255 64 256 66 253 64 249 61 257 66 260" class="icl"/><path d="M66 249V261L69 257 75 257Z" class="ic"/>
<!-- row2 pen --><path d="M29 285C29 279 33 275 38 273L43 278C41 283 37 287 31 287ZM38 273 41 270 46 275 43 278" class="ic"/><circle cx="35" cy="281" r="1.3" fill="#535353"/><use href="#tr" x="37" y="278"/>
<path d="M62 281C64 276 67 274 70 272L74 277C72 280 70 283 65 284ZM70 272 73 269 77 274 74 277" class="ic"/><path d="M62 281C58 276 55 282 59 285 62 287 60 288 58 288" class="icl"/><use href="#tr" x="67" y="278"/>
<!-- row3 T line --><path d="M31 297H43V300H41.5L41 299H38.5V308H40V310H34V308H35.5V299H33L32.5 300H31Z" class="ic"/><use href="#tr" x="37" y="302"/>
<path d="M60 310 75 296" stroke="#c6c6c6" stroke-width="1.4"/><use href="#tr" x="67" y="302"/>
<!-- row4 ellipse brush --><ellipse cx="37" cy="327" rx="8.5" ry="6.5" fill="#7c7c7c" stroke="#c6c6c6" stroke-width="1.2"/><use href="#tr" x="37" y="326"/>
<path d="M60 336C62 335 63 331 66 331L68 333C67 336 64 337 60 336ZM67 330 74 320 76 322 69 332Z" class="ic"/><use href="#tr" x="67" y="326"/>
<!-- row5 shaper eraser --><path d="M40 348C38 344 30 343 28 348 26 353 30 357 35 356" class="icl" style="stroke-width:1.6"/><path d="M35 357 46 346 48 348 37 359Z" class="ic"/><use href="#tr" x="37" y="350"/>
<path d="M60 351 70 342 78 347 67 357H63Z" class="ic"/><path d="M63 348 71 355" stroke="#535353"/><use href="#tr" x="67" y="350"/>
<!-- row6 rotate scale --><path d="M31 372C32 367 43 365 44 373" fill="none" stroke="#ddd" stroke-width="1.5"/><path d="M29 369 31 374 35 371Z" fill="#ddd"/><path d="M30 376C31 383 43 383 44 376" fill="none" stroke="#ddd" stroke-dasharray="1.5 1.5" stroke-width="1.4"/><use href="#tr" x="37" y="374" style="opacity:.9"/>
<rect x="58.5" y="372.5" width="9" height="9" fill="none" stroke="#c6c6c6"/><rect x="64.5" y="366.5" width="12" height="10" fill="none" stroke="#c6c6c6"/><path d="M67 373 73 368.5M70 368.5H73V371" stroke="#c6c6c6" fill="none"/><use href="#tr" x="67" y="374"/>
<!-- row7 warp free --><path d="M29 406C36 406 33 402 36 401 34 397 39 392 42 393 46 393 44 398 47 399 42 399 42 402 39 403 37 406 34 406 29 406Z" class="ic"/><path d="M30 397 33 400M34 393V396" class="icl"/><use href="#tr" x="37" y="398"/>
<rect x="59.5" y="392.5" width="15" height="13" fill="none" stroke="#c6c6c6" stroke-dasharray="4 2"/><path d="M58 390V405L62 401 68 400Z" class="ic"/><use href="#tr" x="67" y="398"/>
<!-- row8 shape builder, perspective --><path d="M28 421C28 416 46 416 46 422 46 427 28 427 28 421Z" class="icl"/><path d="M36 418V426" stroke="#c6c6c6" stroke-dasharray="1 1"/><path d="M43 420V432L46 429 52 429Z" class="ic" transform="translate(-6 0)"/><use href="#tr" x="37" y="422"/>
<path d="M59 414V429H75L59 414M59 419 70 429M59 424 64 429M64 419V429M59 421H68" class="icl" style="stroke-width:1"/><use href="#tr" x="67" y="422"/>
<!-- row9 mesh gradient --><rect x="29.5" y="439.5" width="15" height="14" fill="none" stroke="#c6c6c6"/><path d="M30 444C34 446 34 442 38 443L44 441M36 440C34 445 38 448 36 453M30 449C34 450 38 448 44 450" class="icl" style="stroke-width:1"/>
<defs><linearGradient id="g2"><stop offset="0" stop-color="#444"/><stop offset="1" stop-color="#ddd"/></linearGradient></defs><rect x="59.5" y="439.5" width="15" height="14" fill="url(#g2)" stroke="#c6c6c6"/>
<!-- row10 measure, eyedropper --><path d="M30 474 41 464M29 470 34 477M38 461 44 467" stroke="#c6c6c6" stroke-width="2" fill="none"/><path d="M29 479H36" stroke="#c6c6c6" stroke-width="1.6"/>
<path d="M60 478C59 475 67 467 69 466L72 469C71 471 63 479 60 478Z" class="icl"/><path d="M69 466 74 461 77 464 72 469Z" class="ic"/><use href="#tr" x="67" y="471"/>
<!-- row11 blend, symbol --><rect x="29" y="489" width="7" height="7" fill="#c6c6c6"/><circle cx="37" cy="494" r="4.5" fill="#7c7c7c" stroke="#c6c6c6"/><circle cx="42" cy="498" r="4.5" fill="none" stroke="#c6c6c6"/>
<path d="M58 488h2v2h-2ZM62 488h2v2h-2ZM58 492h2v2h-2ZM62 492h2v2h-2ZM58 496h2v2h-2Z" class="ic"/><rect x="66.5" y="492.5" width="9" height="10" fill="none" stroke="#c6c6c6"/><rect x="68" y="488" width="6" height="4" class="ic"/><circle cx="71" cy="497.5" r="2.4" fill="none" stroke="#c6c6c6"/><use href="#tr" x="67" y="495"/>
<!-- row12 graph artboard --><path d="M29.5 510V526H47" class="icl"/><path d="M32 518H35V525H32ZM37 514H40V525H37ZM42 512H45V525H42Z" class="ic"/><use href="#tr" x="37" y="519"/>
<path d="M61 517H75V527H64V517M64 511V517M58 517H61" class="icl"/><path d="M64 517H70L75 521" fill="none" stroke="#c6c6c6"/>
<!-- row13 slice hand --><path d="M29 550 41 536 44 538 41 547 31 551Z" class="icl"/><path d="M35 544 41 538" stroke="#c6c6c6"/><use href="#tr" x="37" y="541"/>
<path d="M61 543C60 540 57 539 56 540 57 544 61 551 66 551H70C75 551 76 547 76 543V538H74V542L73.5 536H71.5V542L71 535H69V542L68 536H66V545Z" class="ic"/><use href="#tr" x="67" y="541"/>
<!-- row14 dock/zoom --><path d="M31 560C33 565 33 570 31 575" class="icl"/><path d="M34 561H42V566H34ZM34 568H47V574H34Z" class="ic"/>
<circle cx="65" cy="565" r="5.5" fill="none" stroke="#c6c6c6" stroke-width="1.5"/><path d="M69 569 75 575" stroke="#c6c6c6" stroke-width="2"/>
</g>
<rect x="22" y="581" width="60" height="1" fill="#474747"/>
<!-- fill/stroke -->
<rect x="41.5" y="605.5" width="33" height="33" fill="#000" stroke="#fff"/><rect x="49.5" y="613.5" width="17" height="17" fill="#535353" stroke="#fff"/>
<rect x="22.5" y="586.5" width="35" height="35" fill="#fff" stroke="#333"/><path d="M23 621 57 587" stroke="#f00" stroke-width="2"/>
<path d="M68 593V589H73M70.5 586.5 67.5 589 70.5 591.5M73 589Q76 590 76 596M73.5 594 76 598 78 594" fill="none" stroke="#c6c6c6" stroke-width="1.6"/>
<rect x="27.5" y="631.5" width="7" height="7" fill="#000" stroke="#fff"/><rect x="23.5" y="627.5" width="7" height="7" fill="#fff" stroke="#000"/>
<!-- modes -->
<rect x="23.5" y="645.5" width="58" height="20.5" rx="2" fill="#4d4d4d" stroke="#5f5f5f"/><rect x="62" y="646" width="19" height="20" fill="#333"/>
<rect x="26" y="650" width="13" height="13" fill="#fff" stroke="#111"/><rect x="45" y="650" width="13" height="13" fill="url(#gr)" stroke="#111"/><rect x="65" y="650" width="13" height="13" fill="#fff" stroke="#111"/><path d="M65 663 78 650" stroke="#f00" stroke-width="2.4"/>
<rect x="23.5" y="671.5" width="58" height="18" rx="2" fill="#4d4d4d" stroke="#5f5f5f"/><rect x="24" y="672" width="20" height="17" fill="#333"/>
<circle cx="33" cy="679" r="4.5" fill="#777" stroke="#ccc"/><rect x="34" y="680" width="5" height="5" fill="#ccc"/><circle cx="52" cy="679" r="4.5" fill="#777" stroke="#ccc"/><rect x="55" y="682" width="5" height="3" fill="#aaa"/><circle cx="71" cy="679" r="4.5" fill="#777" stroke="#ccc"/><path d="M71 677H74" stroke="#333"/>
<!-- screen mode --><rect x="41.5" y="703.5" width="14" height="11" fill="none" stroke="#c6c6c6"/><rect x="50.5" y="698.5" width="13" height="11" fill="#777" stroke="#c6c6c6"/><rect x="51" y="699" width="12" height="2.5" fill="#c6c6c6"/>
<circle cx="47" cy="738" r="1.7" fill="#c6c6c6"/><circle cx="52.5" cy="738" r="1.7" fill="#c6c6c6"/><circle cx="58" cy="738" r="1.7" fill="#c6c6c6"/>

<!-- Rotate dialog -->
<rect x="1042" y="313" width="341" height="260" rx="6" fill="#535353" filter="url(#sh)"/>
<path d="M1042 344V319A6 6 0 0 1 1048 313H1377A6 6 0 0 1 1383 319V344Z" fill="#f1f1f1" stroke="#bbb" stroke-width=".5"/>
<text x="1050" y="333" style="fill:#1a1a1a;font-size:12px" textLength="34" lengthAdjust="spacingAndGlyphs">Rotate</text>
<rect x="1057.5" y="375" width="310" height="94" fill="none" stroke="#494949"/>
<rect x="1064" y="370" width="41" height="10" fill="#535353"/>
<text x="1067" y="379" style="fill:#b8b8b8;font-size:12px" textLength="34" lengthAdjust="spacingAndGlyphs">Rotate</text>
<text x="1111" y="416" class="end" style="fill:#b8b8b8;font-size:12px" textLength="33" lengthAdjust="spacingAndGlyphs">Angle:</text>
<circle cx="1132.5" cy="410" r="16" fill="none" stroke="#3a97e8" stroke-width="2"/><path d="M1132.5 410.5 1148 405.5" stroke="#3a97e8" stroke-width="2"/>
<rect x="1157" y="402" width="57" height="19" fill="#fff" stroke="#3a97e8" stroke-width="1.2"/>
<rect x="1161" y="404" width="20" height="15" fill="#0a5fc0"/><path d="M1181 404V419" stroke="#d06020"/>
<text x="1161" y="415.5" style="fill:#fff;font-size:12.5px">20°</text>
<text x="1111" y="451" class="end" style="fill:#b8b8b8;font-size:12px" textLength="44" lengthAdjust="spacingAndGlyphs">Options:</text>
<rect x="1116" y="440" width="12" height="12" rx="1.5" fill="#6f6f6f"/><path d="M1118.5 446 1121 448.5 1125.5 443" fill="none" stroke="#3f3f3f" stroke-width="1.6"/>
<text x="1133" y="451" style="fill:#6c6c6c;font-size:12px" textLength="96" lengthAdjust="spacingAndGlyphs">Transform Objects</text>
<rect x="1241.5" y="441.5" width="11" height="11" rx="1.5" fill="none" stroke="#6c6c6c"/>
<text x="1258" y="452" style="fill:#6c6c6c;font-size:12px" textLength="100" lengthAdjust="spacingAndGlyphs">Transform Patterns</text>
<rect x="1058" y="482" width="12" height="12" rx="1.5" fill="#a8a8a8"/><path d="M1060.5 488 1063 490.5 1067.5 485" fill="none" stroke="#3f3f3f" stroke-width="1.6"/>
<text x="1075" y="492" style="fill:#dedede;font-size:12px" textLength="41" lengthAdjust="spacingAndGlyphs">Preview</text>
<rect x="1057" y="517" width="92" height="26" rx="13" fill="#fff"/><text x="1103" y="535" class="mid" style="fill:#333;font-size:12px">Copy</text>
<rect x="1180" y="518" width="90" height="24" rx="12" fill="none" stroke="#fff" stroke-width="2"/><text x="1225" y="535" class="mid" style="fill:#f2f2f2;font-size:12px">OK</text>
<rect x="1276.5" y="517.5" width="91" height="25" rx="12.5" fill="none" stroke="#f0f0f0"/><text x="1322" y="535" class="mid" style="fill:#f2f2f2;font-size:12px">Cancel</text>
</svg>
</body></html>
